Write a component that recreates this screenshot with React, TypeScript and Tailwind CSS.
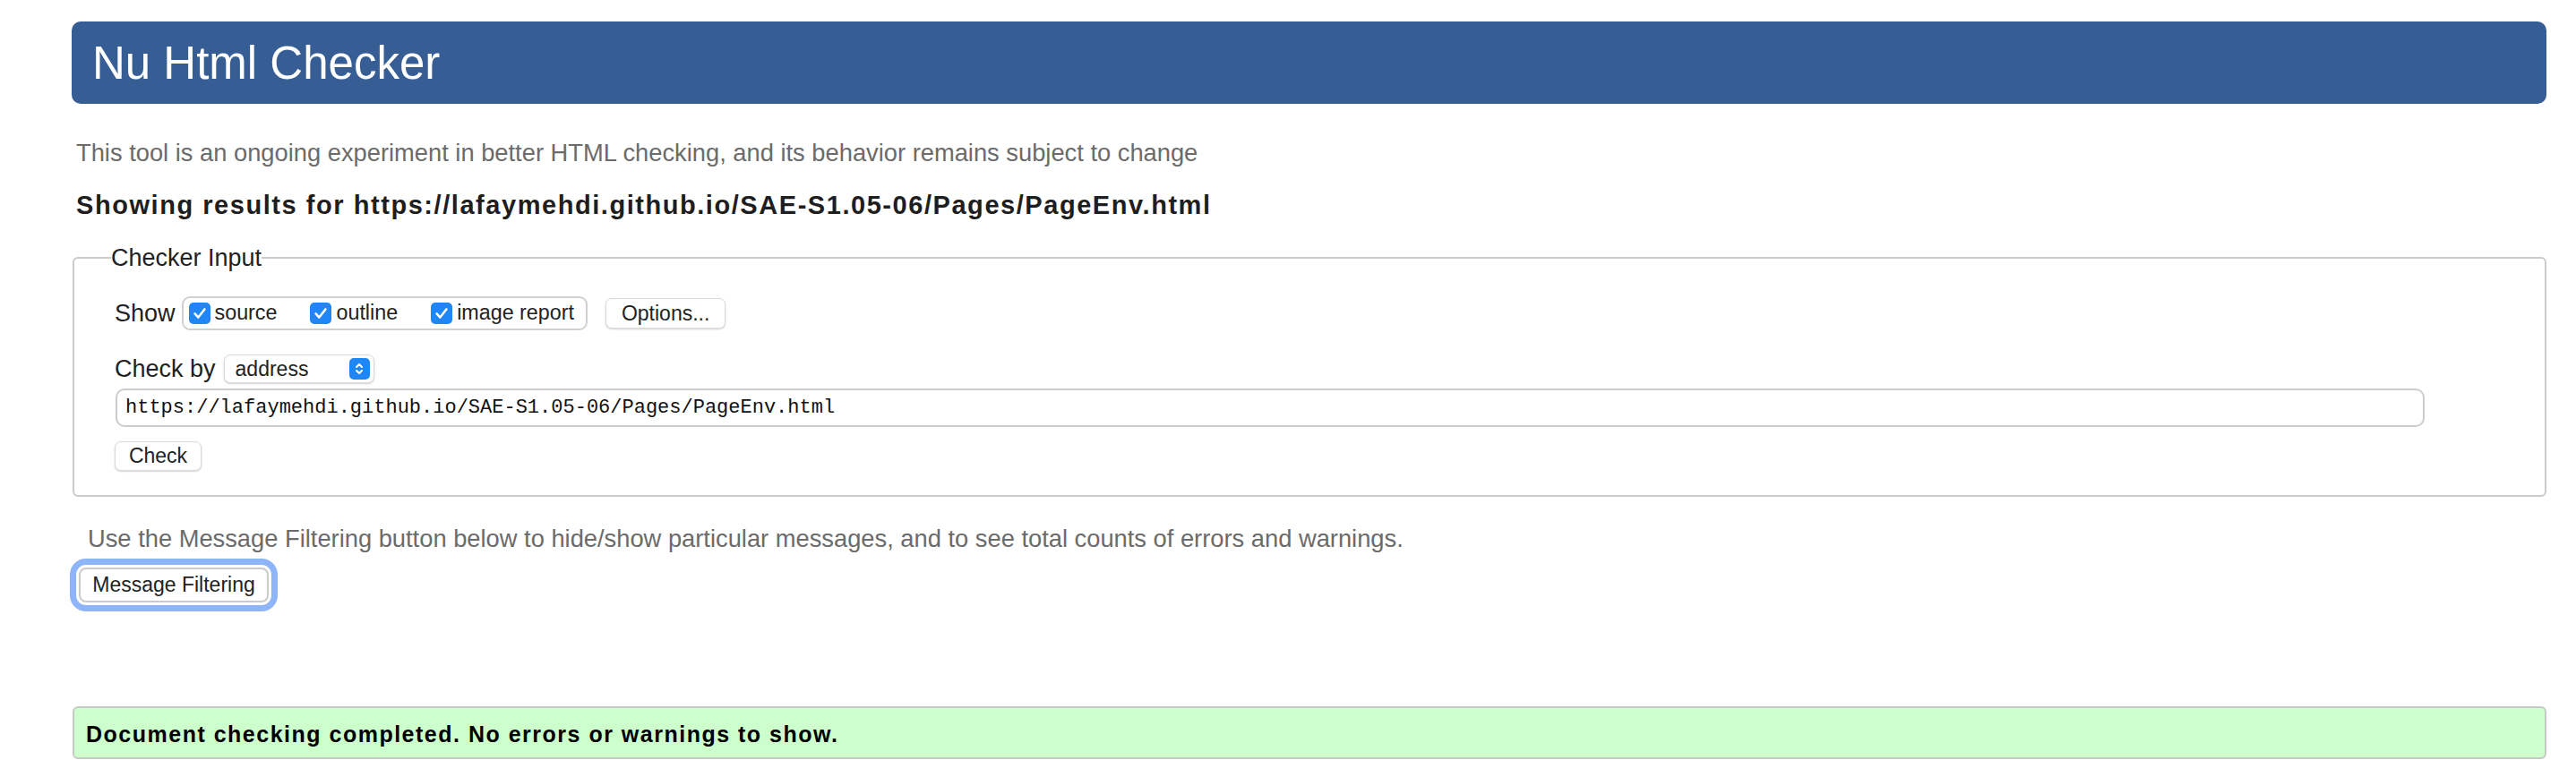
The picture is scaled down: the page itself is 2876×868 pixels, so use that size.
function Tick({ className = "" }: { className?: string }) {
  return (
    <span className={`flex h-[24px] w-[24px] shrink-0 items-center justify-center rounded-[5px] bg-[#1f86f6] ${className}`}>
      <svg viewBox="0 0 24 24" className="h-[20px] w-[20px]" fill="none" stroke="white" strokeWidth="3" strokeLinecap="round" strokeLinejoin="round">
        <path d="M5.5 12.5l4.5 5 8.5-11" />
      </svg>
    </span>
  );
}

export default function App() {
  return (
    <div className="min-h-screen bg-white pt-[24px] pl-[80px] pr-[33px] font-['Liberation_Sans',Arial,sans-serif] text-[#222]">
      <header className="flex h-[92px] items-center rounded-[10px] bg-[#365d94] pl-[23px]">
        <h1 className="text-[51px] leading-none text-white">Nu Html Checker</h1>
      </header>

      <p className="mt-[39px] ml-[5px] text-[27.3px] leading-[32px] text-[#6b6b6b]">
        This tool is an ongoing experiment in better HTML checking, and its behavior remains subject to change
      </p>
      <h2 className="mt-[26px] ml-[5px] text-[29px] font-bold leading-[32px] tracking-[1.55px] text-[#1e1e20]">
        Showing results for https://lafaymehdi.github.io/SAE-S1.05-06/Pages/PageEnv.html
      </h2>

      <fieldset className="mt-[27px] ml-[1px] rounded-[6px] border-2 border-[#cbcbcb] pl-[41px] pb-[27px]">
        <legend className="px-0 text-[27px] leading-[32px]">Checker Input</legend>
        <div className="pl-[4px]">
          <div className="mt-[27px] flex h-[38px] items-center">
            <span className="text-[27px] leading-[32px]">Show</span>
            <div className="ml-[7px] flex h-[38px] items-center rounded-[9px] border-2 border-[#d0d0d0] pl-[6px] pr-[13px] text-[23.3px] leading-none">
              <Tick />
              <span className="ml-[5px]">source</span>
              <Tick className="ml-[37px]" />
              <span className="ml-[5px]">outline</span>
              <Tick className="ml-[37px]" />
              <span className="ml-[5px]">image report</span>
            </div>
            <button className="ml-[20px] h-[34px] rounded-[7px] border border-[#dadada] bg-white px-[17px] text-[23px] leading-none shadow-[0_1px_2px_rgba(0,0,0,0.18)]">
              Options...
            </button>
          </div>

          <div className="mt-[27px] flex h-[32px] items-center">
            <span className="text-[27px] leading-[32px]">Check by</span>
            <div className="ml-[9px] flex h-[32px] w-[168px] items-center justify-between rounded-[7px] border border-[#dadada] bg-white pl-[12px] pr-[4px] text-[23px] leading-none shadow-[0_1px_2px_rgba(0,0,0,0.18)]">
              <span>address</span>
              <span className="flex h-[24px] w-[23px] items-center justify-center rounded-[5px] bg-[#1f86f6]">
                <svg viewBox="0 0 12 16" className="h-[16px] w-[12px]" fill="none" stroke="white" strokeWidth="2" strokeLinecap="round" strokeLinejoin="round">
                  <path d="M3 6l3-3 3 3M3 10l3 3 3-3" />
                </svg>
              </span>
            </div>
          </div>

          <input
            readOnly
            value="https://lafaymehdi.github.io/SAE-S1.05-06/Pages/PageEnv.html"
            className="mt-[6px] ml-[1px] block h-[43px] w-[2578px] rounded-[10px] border-2 border-[#cccccc] pl-[9px] font-['Liberation_Mono','DejaVu_Sans_Mono',monospace] text-[22px] text-[#111] outline-none"
          />

          <button className="mt-[16px] block h-[33px] w-[97px] rounded-[7px] border border-[#dadada] bg-white text-[23px] leading-none shadow-[0_1px_2px_rgba(0,0,0,0.18)]">
            Check
          </button>
        </div>
      </fieldset>

      <p className="mt-[31px] ml-[18px] text-[27.3px] leading-[32px] text-[#6b6b6b]">
        Use the Message Filtering button below to hide/show particular messages, and to see total counts of errors and warnings.
      </p>
      <div className="mt-[16px] ml-[8px]">
        <button className="h-[39px] w-[212px] rounded-[8px] border-2 border-[#cbcbcb] bg-white text-[23px] leading-none text-[#222] outline-7 outline-solid outline-[#8eb4f9] outline-offset-3">
          Message Filtering
        </button>
      </div>

      <div className="mt-[116px] ml-[1px] rounded-[6px] border-2 border-[#c8c8c8] bg-[#ccffcc] pt-[14px] pb-[11px] pl-[13px] text-[25px] font-bold leading-[30px] tracking-[1.5px] text-black">
        Document checking completed. No errors or warnings to show.
      </div>
    </div>
  );
}
